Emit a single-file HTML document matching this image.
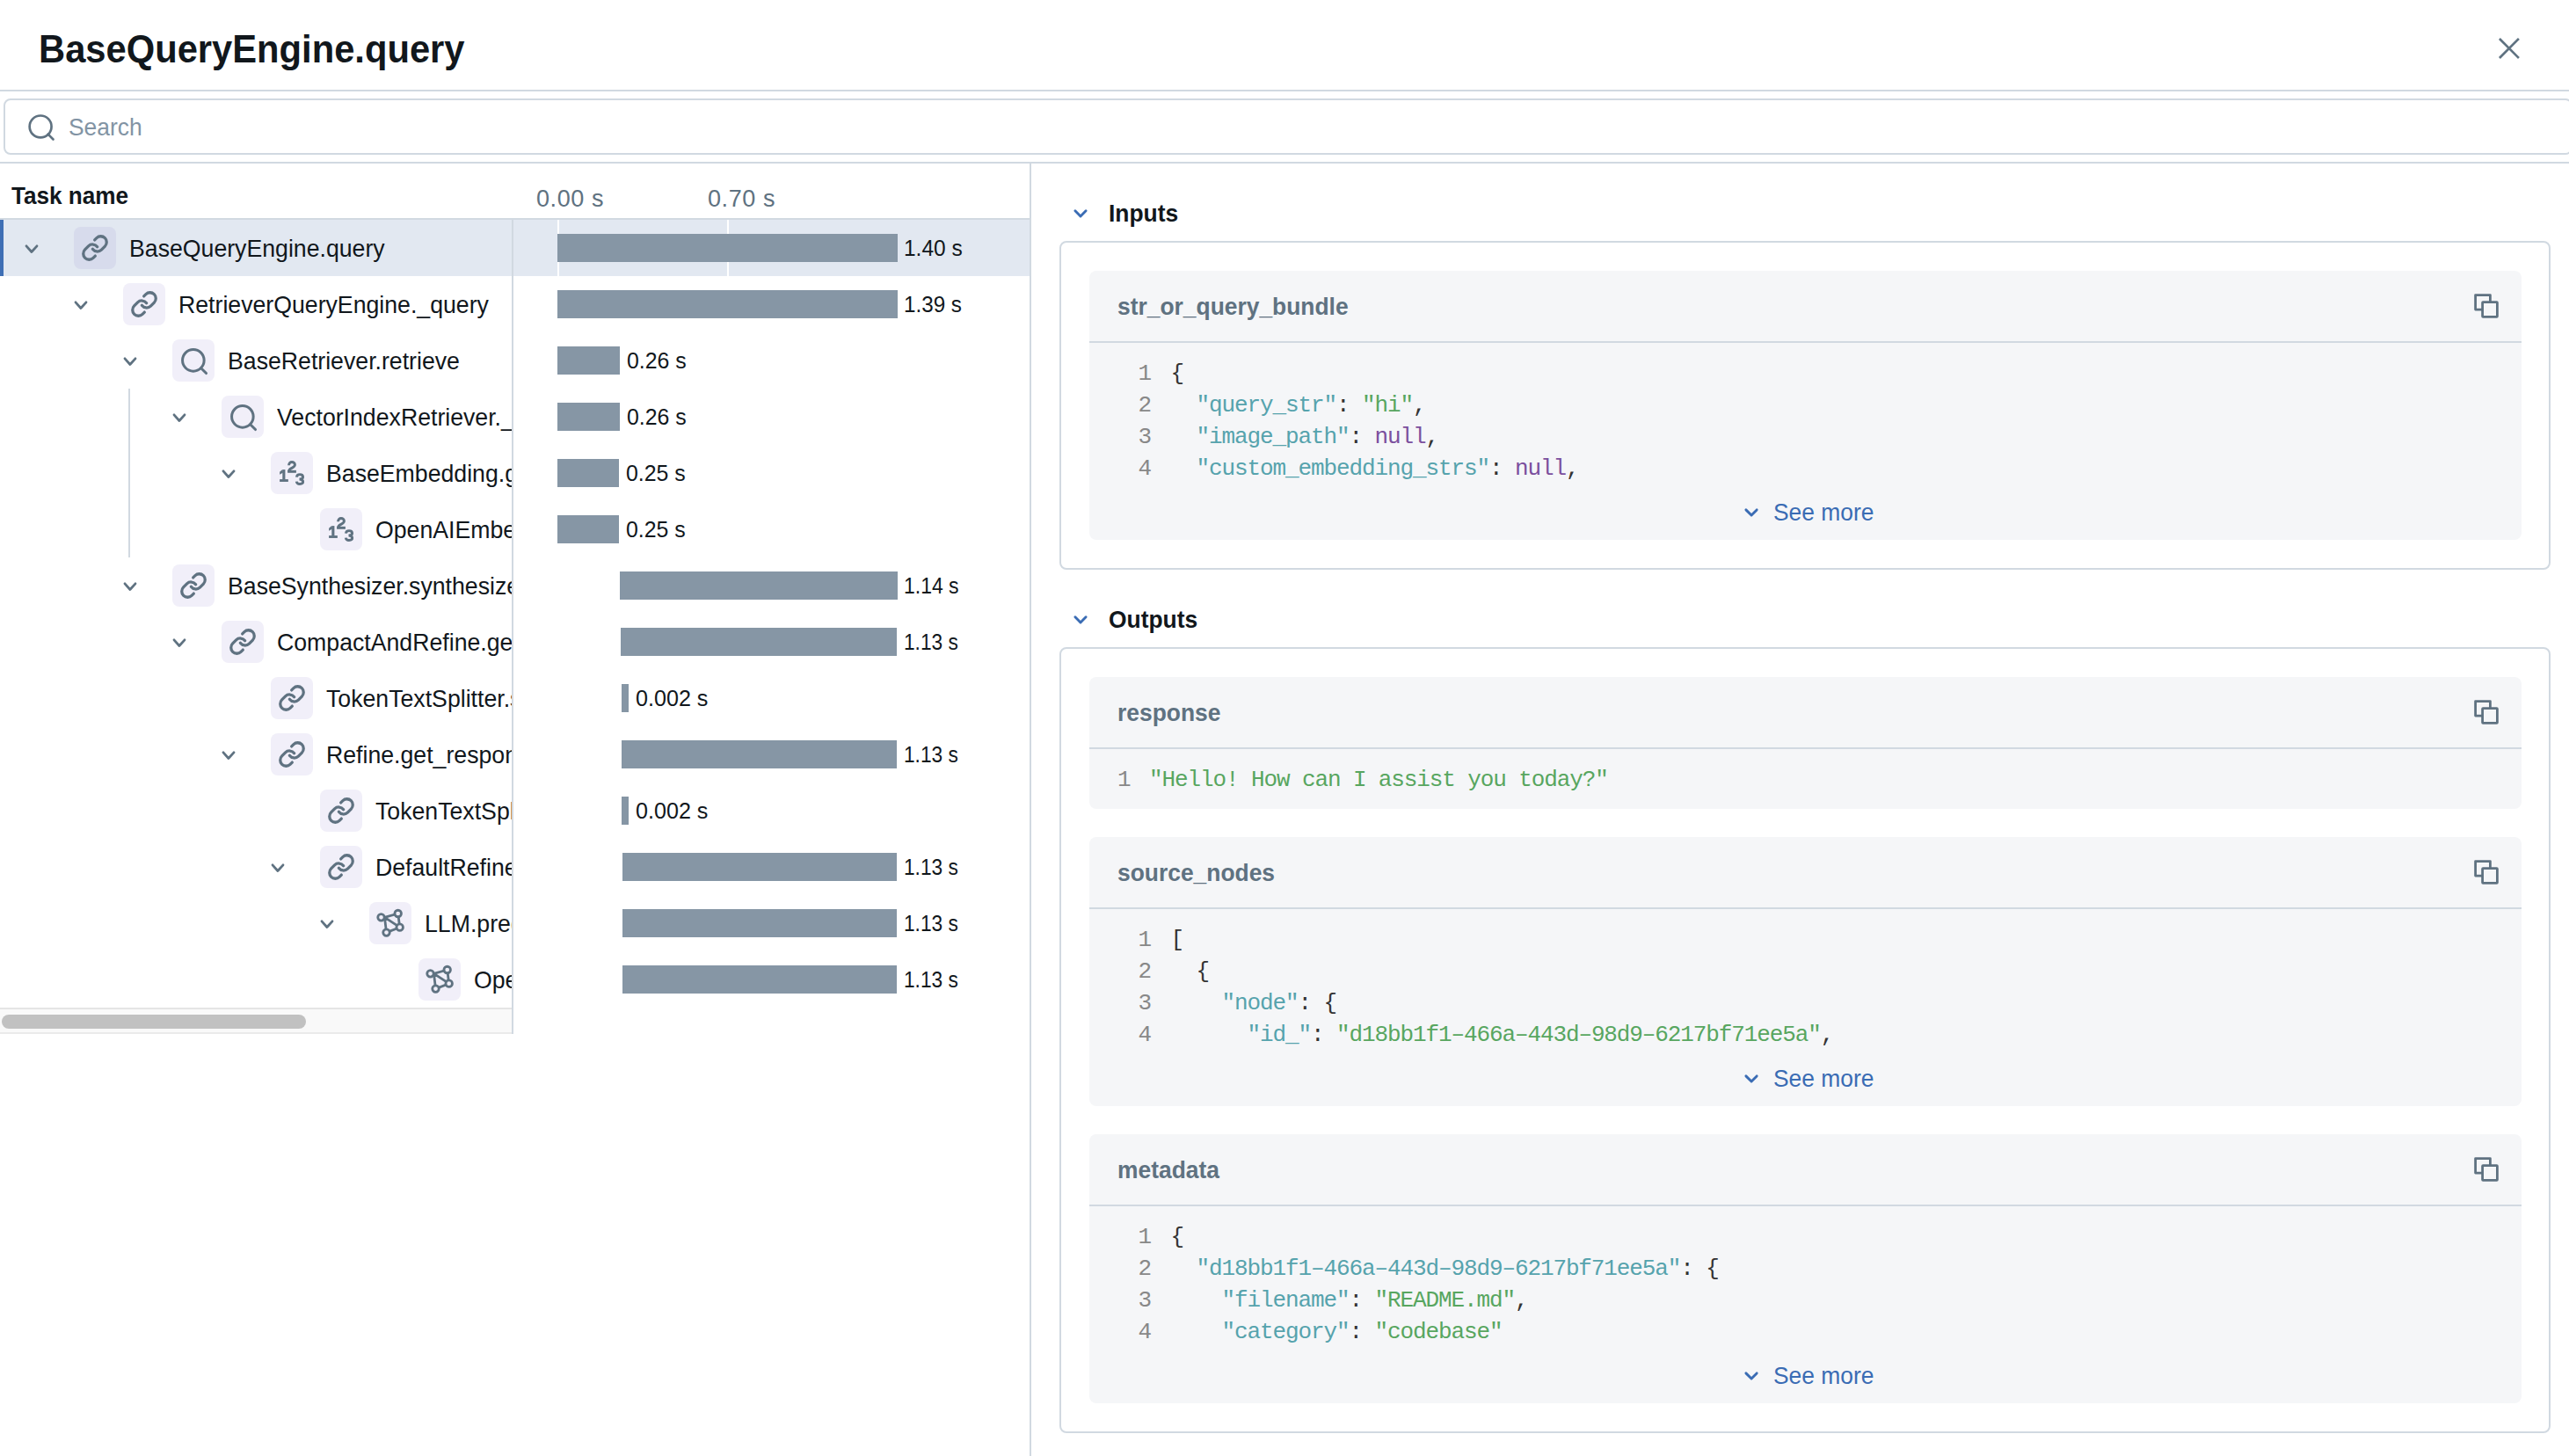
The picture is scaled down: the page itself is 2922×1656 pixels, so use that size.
<!DOCTYPE html>
<html><head><meta charset="utf-8">
<style>
*{box-sizing:border-box;margin:0;padding:0}
html,body{width:2922px;height:1656px;overflow:hidden;background:#fff}
body{position:relative;font-family:"Liberation Sans",sans-serif;color:#11171c}
.a{position:absolute;white-space:nowrap}
.hl{position:absolute;background:#d1d9e1}
.title{left:44px;top:31px;font-size:45px;line-height:50px;font-weight:bold;transform:scaleX(0.927);transform-origin:0 0}
.search{left:4px;top:112px;width:2922px;height:64px;border:2px solid #d1d9e1;border-radius:8px}
.ph{left:78px;top:113px;font-size:27.5px;line-height:64px;color:#8294a4;transform:scaleX(0.96);transform-origin:0 0}
.th{font-size:27.5px;font-weight:bold;line-height:40px;transform:scaleX(0.95);transform-origin:0 0}
.tl{font-size:27px;line-height:40px;color:#5f7281;letter-spacing:0.6px}
.row{position:absolute;left:0;width:582px;height:64px;overflow:hidden}
.chev{position:absolute;top:0}
.ibox{position:absolute;top:8px;width:48px;height:48px;border-radius:8px;background:#f1eff9}
.sel .ibox{background:#d7dbec}
.ibox svg{position:absolute;left:6px;top:6px}
.rt{position:absolute;top:1px;font-size:27.5px;line-height:64px;transform:scaleX(0.97);transform-origin:0 0}
.bar{position:absolute;height:32px;background:#8696a5}
.bl{position:absolute;font-size:26.5px;line-height:64px;transform:scaleX(0.943);transform-origin:0 0}
.sec{font-size:27.5px;font-weight:bold;line-height:40px;transform:scaleX(0.96);transform-origin:0 0}
.card{position:absolute;left:1205px;width:1696px;border:2px solid #d1d9e1;border-radius:8px}
.blk{position:absolute;left:1239px;width:1629px;background:#f5f6f8;border-radius:8px}
.bh{position:absolute;left:32px;top:21px;font-size:27.5px;font-weight:bold;line-height:40px;color:#5f7281;transform:scaleX(0.96);transform-origin:0 0;white-space:nowrap}
.bsep{position:absolute;left:0;right:0;top:80px;height:2px;background:#d1d9e1}
.copy{position:absolute;left:1573px;top:24px}
.code{position:absolute;left:0;top:82px;font-family:"Liberation Mono",monospace;font-size:26px;letter-spacing:-1.11px;line-height:36px;color:#333;white-space:pre}
.cl{position:absolute;left:0;height:36px;white-space:pre}
.ln{position:absolute;top:0;color:#888;text-align:right;width:40px}
.ct{position:absolute;top:0}
.k{color:#56a3ad}.s{color:#58a660}.n{color:#7b4f9e}
.more{position:absolute;font-size:27.5px;line-height:40px;color:#3a6cb4;transform:scaleX(0.96);transform-origin:0 0;white-space:nowrap}
</style></head><body>
<div class="a title">BaseQueryEngine.query</div>
<svg class="a" style="left:2838px;top:39px" width="32" height="32" viewBox="0 0 32 32"><path d="M5.9 5.9L26 26.1M26 5.9L5.9 26.1" stroke="#5f7281" stroke-width="2.7" stroke-linecap="square" fill="none"/></svg>
<div class="hl" style="left:0;top:102px;width:2922px;height:2px"></div>
<div class="a search"></div>
<svg class="a" style="left:29px;top:127px" width="36" height="36" viewBox="0 0 24 24" fill="none" stroke="#5f7281" stroke-width="1.8" stroke-linecap="round"><circle cx="11.4" cy="11.3" r="8.3"/><path d="M21 21l-3.9-3.9"/></svg>
<div class="a ph">Search</div>
<div class="hl" style="left:0;top:184px;width:2922px;height:2px"></div>
<div class="hl" style="left:1171px;top:184px;width:2px;height:1472px"></div>

<div class="a th" style="left:13px;top:203px">Task name</div>
<div class="a tl" style="left:610px;top:206px">0.00 s</div>
<div class="a tl" style="left:805px;top:206px">0.70 s</div>
<div class="a" style="left:0;top:250px;width:1171px;height:64px;background:#e2e8f1"></div>
<div class="a" style="left:0;top:250px;width:4px;height:64px;background:#3f6fb5"></div>
<div class="a" style="left:634px;top:250px;width:2px;height:64px;background:#fff"></div>
<div class="a" style="left:827px;top:250px;width:2px;height:64px;background:#fff"></div>
<div class="hl" style="left:0;top:248px;width:1171px;height:2px"></div>
<div class="hl" style="left:582px;top:250px;width:2px;height:926px"></div>
<div class="hl" style="left:146px;top:442px;width:2px;height:192px"></div>
<div class="row sel" style="top:250px"><div style="position:absolute;left:28px;top:0"><svg class="chev" width="24" height="64" viewBox="0 0 24 64" fill="none" stroke="#5f7281" stroke-width="2.8" stroke-linecap="round" stroke-linejoin="round"><path d="M2 29.85L7.93 36.5L13.98 29.85"/></svg></div><div class="ibox" style="left:84px"><svg width="32" height="32" style="left:8px;top:8px" viewBox="0 0 24 24" fill="none" stroke="#5f7281" stroke-width="2.45" stroke-linecap="round" stroke-linejoin="round"><path d="M10 13a5 5 0 0 0 7.54.54l3-3a5 5 0 0 0-7.07-7.07l-1.72 1.71"/><path d="M14 11a5 5 0 0 0-7.54-.54l-3 3a5 5 0 0 0 7.07 7.07l1.71-1.71"/></svg></div><div class="rt" style="left:147px">BaseQueryEngine.query</div></div>
<div class="bar" style="left:634px;top:266px;width:387px"></div>
<div class="a bl" style="left:1028px;top:250px;transform:scaleX(0.924)">1.40 s</div>
<div class="row" style="top:314px"><div style="position:absolute;left:84px;top:0"><svg class="chev" width="24" height="64" viewBox="0 0 24 64" fill="none" stroke="#5f7281" stroke-width="2.8" stroke-linecap="round" stroke-linejoin="round"><path d="M2 29.85L7.93 36.5L13.98 29.85"/></svg></div><div class="ibox" style="left:140px"><svg width="32" height="32" style="left:8px;top:8px" viewBox="0 0 24 24" fill="none" stroke="#5f7281" stroke-width="2.45" stroke-linecap="round" stroke-linejoin="round"><path d="M10 13a5 5 0 0 0 7.54.54l3-3a5 5 0 0 0-7.07-7.07l-1.72 1.71"/><path d="M14 11a5 5 0 0 0-7.54-.54l-3 3a5 5 0 0 0 7.07 7.07l1.71-1.71"/></svg></div><div class="rt" style="left:203px">RetrieverQueryEngine._query</div></div>
<div class="bar" style="left:634px;top:330px;width:387px"></div>
<div class="a bl" style="left:1028px;top:314px;transform:scaleX(0.914)">1.39 s</div>
<div class="row" style="top:378px"><div style="position:absolute;left:140px;top:0"><svg class="chev" width="24" height="64" viewBox="0 0 24 64" fill="none" stroke="#5f7281" stroke-width="2.8" stroke-linecap="round" stroke-linejoin="round"><path d="M2 29.85L7.93 36.5L13.98 29.85"/></svg></div><div class="ibox" style="left:196px"><svg width="36" height="36" viewBox="0 0 24 24" fill="none" stroke="#5f7281" stroke-width="2" stroke-linecap="round" stroke-linejoin="round"><circle cx="11.9" cy="11.9" r="8.2"/><path d="M21.7 21.7l-3.9-3.9"/></svg></div><div class="rt" style="left:259px">BaseRetriever.retrieve</div></div>
<div class="bar" style="left:634px;top:394px;width:71px"></div>
<div class="a bl" style="left:713px;top:378px;transform:scaleX(0.938)">0.26 s</div>
<div class="row" style="top:442px"><div style="position:absolute;left:196px;top:0"><svg class="chev" width="24" height="64" viewBox="0 0 24 64" fill="none" stroke="#5f7281" stroke-width="2.8" stroke-linecap="round" stroke-linejoin="round"><path d="M2 29.85L7.93 36.5L13.98 29.85"/></svg></div><div class="ibox" style="left:252px"><svg width="36" height="36" viewBox="0 0 24 24" fill="none" stroke="#5f7281" stroke-width="2" stroke-linecap="round" stroke-linejoin="round"><circle cx="11.9" cy="11.9" r="8.2"/><path d="M21.7 21.7l-3.9-3.9"/></svg></div><div class="rt" style="left:315px">VectorIndexRetriever._retrieve</div></div>
<div class="bar" style="left:634px;top:458px;width:71px"></div>
<div class="a bl" style="left:713px;top:442px;transform:scaleX(0.938)">0.26 s</div>
<div class="row" style="top:506px"><div style="position:absolute;left:252px;top:0"><svg class="chev" width="24" height="64" viewBox="0 0 24 64" fill="none" stroke="#5f7281" stroke-width="2.8" stroke-linecap="round" stroke-linejoin="round"><path d="M2 29.85L7.93 36.5L13.98 29.85"/></svg></div><div class="ibox" style="left:308px"><svg width="36" height="36" viewBox="0 0 36 36"><g fill="#5f7281"><rect x="4.1" y="25.1" width="9.75" height="2.85"/><rect x="7.3" y="14.1" width="3.1" height="11.5"/><path d="M4.1 16.7L7.3 14.1L8 17.5L4.1 19.8Z"/><rect x="13.1" y="14.85" width="9.8" height="2.95"/></g><g fill="none" stroke="#5f7281" stroke-width="2.9"><path d="M14.55 9.3C14.55 6.9 16.1 5.45 18 5.45C19.9 5.45 21.45 6.8 21.45 8.6C21.45 10.6 19.8 11.4 17.8 12.4C15.8 13.4 14.55 14.3 14.55 16.3"/><path d="M23.4 22.6C23.6 20.6 25.1 19.65 27 19.65C29 19.65 30.6 20.8 30.6 22.6C30.6 24.3 29.3 25.05 26.5 25.05M26.5 25.05C29.5 25.05 30.65 26.2 30.65 28.1C30.65 29.9 29.1 30.45 27 30.45C25 30.45 23.5 29.6 23.3 27.6"/></g></svg></div><div class="rt" style="left:371px">BaseEmbedding.get_query_embedding</div></div>
<div class="bar" style="left:634px;top:522px;width:70px"></div>
<div class="a bl" style="left:712px;top:506px;transform:scaleX(0.938)">0.25 s</div>
<div class="row" style="top:570px"><div class="ibox" style="left:364px"><svg width="36" height="36" viewBox="0 0 36 36"><g fill="#5f7281"><rect x="4.1" y="25.1" width="9.75" height="2.85"/><rect x="7.3" y="14.1" width="3.1" height="11.5"/><path d="M4.1 16.7L7.3 14.1L8 17.5L4.1 19.8Z"/><rect x="13.1" y="14.85" width="9.8" height="2.95"/></g><g fill="none" stroke="#5f7281" stroke-width="2.9"><path d="M14.55 9.3C14.55 6.9 16.1 5.45 18 5.45C19.9 5.45 21.45 6.8 21.45 8.6C21.45 10.6 19.8 11.4 17.8 12.4C15.8 13.4 14.55 14.3 14.55 16.3"/><path d="M23.4 22.6C23.6 20.6 25.1 19.65 27 19.65C29 19.65 30.6 20.8 30.6 22.6C30.6 24.3 29.3 25.05 26.5 25.05M26.5 25.05C29.5 25.05 30.65 26.2 30.65 28.1C30.65 29.9 29.1 30.45 27 30.45C25 30.45 23.5 29.6 23.3 27.6"/></g></svg></div><div class="rt" style="left:427px">OpenAIEmbedding._get_query_embedding</div></div>
<div class="bar" style="left:634px;top:586px;width:70px"></div>
<div class="a bl" style="left:712px;top:570px;transform:scaleX(0.938)">0.25 s</div>
<div class="row" style="top:634px"><div style="position:absolute;left:140px;top:0"><svg class="chev" width="24" height="64" viewBox="0 0 24 64" fill="none" stroke="#5f7281" stroke-width="2.8" stroke-linecap="round" stroke-linejoin="round"><path d="M2 29.85L7.93 36.5L13.98 29.85"/></svg></div><div class="ibox" style="left:196px"><svg width="32" height="32" style="left:8px;top:8px" viewBox="0 0 24 24" fill="none" stroke="#5f7281" stroke-width="2.45" stroke-linecap="round" stroke-linejoin="round"><path d="M10 13a5 5 0 0 0 7.54.54l3-3a5 5 0 0 0-7.07-7.07l-1.72 1.71"/><path d="M14 11a5 5 0 0 0-7.54-.54l-3 3a5 5 0 0 0 7.07 7.07l1.71-1.71"/></svg></div><div class="rt" style="left:259px">BaseSynthesizer.synthesize</div></div>
<div class="bar" style="left:705px;top:650px;width:316px"></div>
<div class="a bl" style="left:1028px;top:634px;transform:scaleX(0.867)">1.14 s</div>
<div class="row" style="top:698px"><div style="position:absolute;left:196px;top:0"><svg class="chev" width="24" height="64" viewBox="0 0 24 64" fill="none" stroke="#5f7281" stroke-width="2.8" stroke-linecap="round" stroke-linejoin="round"><path d="M2 29.85L7.93 36.5L13.98 29.85"/></svg></div><div class="ibox" style="left:252px"><svg width="32" height="32" style="left:8px;top:8px" viewBox="0 0 24 24" fill="none" stroke="#5f7281" stroke-width="2.45" stroke-linecap="round" stroke-linejoin="round"><path d="M10 13a5 5 0 0 0 7.54.54l3-3a5 5 0 0 0-7.07-7.07l-1.72 1.71"/><path d="M14 11a5 5 0 0 0-7.54-.54l-3 3a5 5 0 0 0 7.07 7.07l1.71-1.71"/></svg></div><div class="rt" style="left:315px">CompactAndRefine.get_response</div></div>
<div class="bar" style="left:706px;top:714px;width:314px"></div>
<div class="a bl" style="left:1028px;top:698px;transform:scaleX(0.856)">1.13 s</div>
<div class="row" style="top:762px"><div class="ibox" style="left:308px"><svg width="32" height="32" style="left:8px;top:8px" viewBox="0 0 24 24" fill="none" stroke="#5f7281" stroke-width="2.45" stroke-linecap="round" stroke-linejoin="round"><path d="M10 13a5 5 0 0 0 7.54.54l3-3a5 5 0 0 0-7.07-7.07l-1.72 1.71"/><path d="M14 11a5 5 0 0 0-7.54-.54l-3 3a5 5 0 0 0 7.07 7.07l1.71-1.71"/></svg></div><div class="rt" style="left:371px">TokenTextSplitter.split_text</div></div>
<div class="bar" style="left:707px;top:778px;width:8px"></div>
<div class="a bl" style="left:723px;top:762px;transform:scaleX(0.948)">0.002 s</div>
<div class="row" style="top:826px"><div style="position:absolute;left:252px;top:0"><svg class="chev" width="24" height="64" viewBox="0 0 24 64" fill="none" stroke="#5f7281" stroke-width="2.8" stroke-linecap="round" stroke-linejoin="round"><path d="M2 29.85L7.93 36.5L13.98 29.85"/></svg></div><div class="ibox" style="left:308px"><svg width="32" height="32" style="left:8px;top:8px" viewBox="0 0 24 24" fill="none" stroke="#5f7281" stroke-width="2.45" stroke-linecap="round" stroke-linejoin="round"><path d="M10 13a5 5 0 0 0 7.54.54l3-3a5 5 0 0 0-7.07-7.07l-1.72 1.71"/><path d="M14 11a5 5 0 0 0-7.54-.54l-3 3a5 5 0 0 0 7.07 7.07l1.71-1.71"/></svg></div><div class="rt" style="left:371px">Refine.get_response</div></div>
<div class="bar" style="left:707px;top:842px;width:313px"></div>
<div class="a bl" style="left:1028px;top:826px;transform:scaleX(0.856)">1.13 s</div>
<div class="row" style="top:890px"><div class="ibox" style="left:364px"><svg width="32" height="32" style="left:8px;top:8px" viewBox="0 0 24 24" fill="none" stroke="#5f7281" stroke-width="2.45" stroke-linecap="round" stroke-linejoin="round"><path d="M10 13a5 5 0 0 0 7.54.54l3-3a5 5 0 0 0-7.07-7.07l-1.72 1.71"/><path d="M14 11a5 5 0 0 0-7.54-.54l-3 3a5 5 0 0 0 7.07 7.07l1.71-1.71"/></svg></div><div class="rt" style="left:427px">TokenTextSplitter.split_text</div></div>
<div class="bar" style="left:707px;top:906px;width:8px"></div>
<div class="a bl" style="left:723px;top:890px;transform:scaleX(0.948)">0.002 s</div>
<div class="row" style="top:954px"><div style="position:absolute;left:308px;top:0"><svg class="chev" width="24" height="64" viewBox="0 0 24 64" fill="none" stroke="#5f7281" stroke-width="2.8" stroke-linecap="round" stroke-linejoin="round"><path d="M2 29.85L7.93 36.5L13.98 29.85"/></svg></div><div class="ibox" style="left:364px"><svg width="32" height="32" style="left:8px;top:8px" viewBox="0 0 24 24" fill="none" stroke="#5f7281" stroke-width="2.45" stroke-linecap="round" stroke-linejoin="round"><path d="M10 13a5 5 0 0 0 7.54.54l3-3a5 5 0 0 0-7.07-7.07l-1.72 1.71"/><path d="M14 11a5 5 0 0 0-7.54-.54l-3 3a5 5 0 0 0 7.07 7.07l1.71-1.71"/></svg></div><div class="rt" style="left:427px">DefaultRefineProgram.__call__</div></div>
<div class="bar" style="left:708px;top:970px;width:312px"></div>
<div class="a bl" style="left:1028px;top:954px;transform:scaleX(0.856)">1.13 s</div>
<div class="row" style="top:1018px"><div style="position:absolute;left:364px;top:0"><svg class="chev" width="24" height="64" viewBox="0 0 24 64" fill="none" stroke="#5f7281" stroke-width="2.8" stroke-linecap="round" stroke-linejoin="round"><path d="M2 29.85L7.93 36.5L13.98 29.85"/></svg></div><div class="ibox" style="left:420px"><svg width="36" height="36" viewBox="0 0 36 36" fill="none" stroke="#5f7281" stroke-width="2.8" stroke-linecap="round"><path d="M11.5 11.3L26.7 7M11.5 11.3L28.7 22.7M11.5 11.3L13.5 28.6M26.7 7L28.7 22.7M13.5 28.6L28.7 22.7" /><g fill="#f1eff9"><circle cx="7.5" cy="11.3" r="3.75"/><circle cx="26.7" cy="7" r="3.75"/><circle cx="28.7" cy="22.7" r="3.75"/><circle cx="13.5" cy="28.6" r="3.75"/></g></svg></div><div class="rt" style="left:483px">LLM.predict</div></div>
<div class="bar" style="left:708px;top:1034px;width:312px"></div>
<div class="a bl" style="left:1028px;top:1018px;transform:scaleX(0.856)">1.13 s</div>
<div class="row" style="top:1082px"><div class="ibox" style="left:476px"><svg width="36" height="36" viewBox="0 0 36 36" fill="none" stroke="#5f7281" stroke-width="2.8" stroke-linecap="round"><path d="M11.5 11.3L26.7 7M11.5 11.3L28.7 22.7M11.5 11.3L13.5 28.6M26.7 7L28.7 22.7M13.5 28.6L28.7 22.7" /><g fill="#f1eff9"><circle cx="7.5" cy="11.3" r="3.75"/><circle cx="26.7" cy="7" r="3.75"/><circle cx="28.7" cy="22.7" r="3.75"/><circle cx="13.5" cy="28.6" r="3.75"/></g></svg></div><div class="rt" style="left:539px">OpenAI.chat</div></div>
<div class="bar" style="left:708px;top:1098px;width:312px"></div>
<div class="a bl" style="left:1028px;top:1082px;transform:scaleX(0.856)">1.13 s</div>
<div class="a" style="left:0;top:1146px;width:582px;height:30px;background:#f9f9f9;border-top:2px solid #e5e5e5;border-bottom:2px solid #ebebeb"></div>
<div class="a" style="left:2px;top:1154px;width:346px;height:16px;border-radius:8px;background:#c1c1c1"></div>
<svg class="a" style="left:1218px;top:234px" width="20" height="16" viewBox="0 0 20 16" fill="none" stroke="#3a6cb4" stroke-width="2.9" stroke-linecap="round" stroke-linejoin="round"><path d="M4.9 5.75L11 11.9L17.1 5.75"/></svg>
<div class="a sec" style="left:1261px;top:223px">Inputs</div>
<div class="card" style="top:274px;height:374px"></div>
<div class="blk" style="top:308px;height:306px"><div class="bh">str_or_query_bundle</div><div class="bsep"></div><svg class="copy" width="32" height="32" viewBox="0 0 32 32" fill="none" stroke="#5f7281" stroke-width="2.8" stroke-linejoin="round"><path d="M11.6 20.1H3.6V3.6H20.4V11.6"/><rect x="11.6" y="11.6" width="16.8" height="16.8" rx="0.6"/></svg><div class="cl code" style="top:99px;left:0"><span class="ln" style="left:30px">1</span><span class="ct" style="left:92.6px">{</span></div><div class="cl code" style="top:135px;left:0"><span class="ln" style="left:30px">2</span><span class="ct" style="left:92.6px">  <span class="k">"query_str"</span>: <span class="s">"hi"</span>,</span></div><div class="cl code" style="top:171px;left:0"><span class="ln" style="left:30px">3</span><span class="ct" style="left:92.6px">  <span class="k">"image_path"</span>: <span class="n">null</span>,</span></div><div class="cl code" style="top:207px;left:0"><span class="ln" style="left:30px">4</span><span class="ct" style="left:92.6px">  <span class="k">"custom_embedding_strs"</span>: <span class="n">null</span>,</span></div><div class="more" style="left:778px;top:255px">See more</div><svg style="position:absolute;left:741px;top:266px" width="24" height="16" viewBox="0 0 24 16" fill="none" stroke="#3a6cb4" stroke-width="2.9" stroke-linecap="round" stroke-linejoin="round"><path d="M5.9 5.9L12.07 12.07L18.14 5.9"/></svg></div>
<svg class="a" style="left:1218px;top:696px" width="20" height="16" viewBox="0 0 20 16" fill="none" stroke="#3a6cb4" stroke-width="2.9" stroke-linecap="round" stroke-linejoin="round"><path d="M4.9 5.75L11 11.9L17.1 5.75"/></svg>
<div class="a sec" style="left:1261px;top:685px">Outputs</div>
<div class="card" style="top:736px;height:894px"></div>
<div class="blk" style="top:770px;height:150px"><div class="bh">response</div><div class="bsep"></div><svg class="copy" width="32" height="32" viewBox="0 0 32 32" fill="none" stroke="#5f7281" stroke-width="2.8" stroke-linejoin="round"><path d="M11.6 20.1H3.6V3.6H20.4V11.6"/><rect x="11.6" y="11.6" width="16.8" height="16.8" rx="0.6"/></svg><div class="cl code" style="top:99px;left:0"><span class="ln" style="left:6.5px">1</span><span class="ct" style="left:68px"><span class="s">"Hello! How can I assist you today?"</span></span></div></div>
<div class="blk" style="top:952px;height:306px"><div class="bh">source_nodes</div><div class="bsep"></div><svg class="copy" width="32" height="32" viewBox="0 0 32 32" fill="none" stroke="#5f7281" stroke-width="2.8" stroke-linejoin="round"><path d="M11.6 20.1H3.6V3.6H20.4V11.6"/><rect x="11.6" y="11.6" width="16.8" height="16.8" rx="0.6"/></svg><div class="cl code" style="top:99px;left:0"><span class="ln" style="left:30px">1</span><span class="ct" style="left:92.6px">[</span></div><div class="cl code" style="top:135px;left:0"><span class="ln" style="left:30px">2</span><span class="ct" style="left:92.6px">  {</span></div><div class="cl code" style="top:171px;left:0"><span class="ln" style="left:30px">3</span><span class="ct" style="left:92.6px">    <span class="k">"node"</span>: {</span></div><div class="cl code" style="top:207px;left:0"><span class="ln" style="left:30px">4</span><span class="ct" style="left:92.6px">      <span class="k">"id_"</span>: <span class="s">"d18bb1f1&#8211;466a&#8211;443d&#8211;98d9&#8211;6217bf71ee5a"</span>,</span></div><div class="more" style="left:778px;top:255px">See more</div><svg style="position:absolute;left:741px;top:266px" width="24" height="16" viewBox="0 0 24 16" fill="none" stroke="#3a6cb4" stroke-width="2.9" stroke-linecap="round" stroke-linejoin="round"><path d="M5.9 5.9L12.07 12.07L18.14 5.9"/></svg></div>
<div class="blk" style="top:1290px;height:306px"><div class="bh">metadata</div><div class="bsep"></div><svg class="copy" width="32" height="32" viewBox="0 0 32 32" fill="none" stroke="#5f7281" stroke-width="2.8" stroke-linejoin="round"><path d="M11.6 20.1H3.6V3.6H20.4V11.6"/><rect x="11.6" y="11.6" width="16.8" height="16.8" rx="0.6"/></svg><div class="cl code" style="top:99px;left:0"><span class="ln" style="left:30px">1</span><span class="ct" style="left:92.6px">{</span></div><div class="cl code" style="top:135px;left:0"><span class="ln" style="left:30px">2</span><span class="ct" style="left:92.6px">  <span class="k">"d18bb1f1&#8211;466a&#8211;443d&#8211;98d9&#8211;6217bf71ee5a"</span>: {</span></div><div class="cl code" style="top:171px;left:0"><span class="ln" style="left:30px">3</span><span class="ct" style="left:92.6px">    <span class="k">"filename"</span>: <span class="s">"README.md"</span>,</span></div><div class="cl code" style="top:207px;left:0"><span class="ln" style="left:30px">4</span><span class="ct" style="left:92.6px">    <span class="k">"category"</span>: <span class="s">"codebase"</span></span></div><div class="more" style="left:778px;top:255px">See more</div><svg style="position:absolute;left:741px;top:266px" width="24" height="16" viewBox="0 0 24 16" fill="none" stroke="#3a6cb4" stroke-width="2.9" stroke-linecap="round" stroke-linejoin="round"><path d="M5.9 5.9L12.07 12.07L18.14 5.9"/></svg></div>
</body></html>
